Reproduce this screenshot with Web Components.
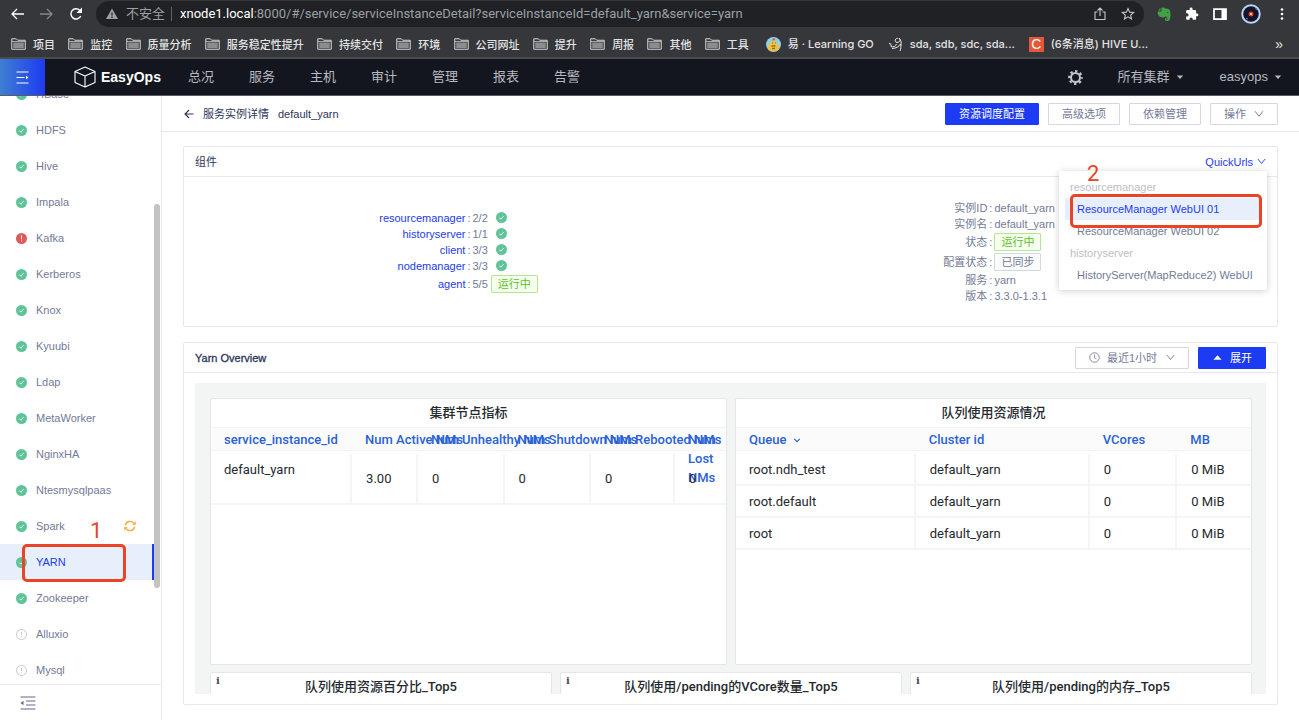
<!DOCTYPE html>
<html lang="zh-CN">
<head>
<meta charset="utf-8">
<title>EasyOps - 服务实例详情</title>
<style>
  html, body { margin: 0; height: 100%; }
  body {
    --blue: #1d3bf2; --ink: #2c3558; --muted: #737a98; --line: #e6e8ef; --red: #ea4326;
    font: 11px/16px "Liberation Sans", "Noto Sans CJK SC", sans-serif;
    color: var(--muted); background: #fff; overflow: hidden;
  }
</style>
</head>
<body>
<ops-page></ops-page>

<script>
const define = (name, html, setup) => {
  const tpl = document.createElement('template');
  tpl.innerHTML = `<style>*{box-sizing:border-box}:host{box-sizing:border-box}
    button,select,input{font:inherit;color:inherit;margin:0;padding:0;border:0;background:none;outline:0}
    a{color:inherit;text-decoration:none}ul,dl,dd,h1,h2,h3{margin:0;padding:0;font:inherit;list-style:none}
    svg{display:block;flex:none}</style>` + html;
  customElements.define(name, class extends HTMLElement {
    connectedCallback() {
      if (this.shadowRoot) return;
      const root = this.attachShadow({ mode: 'open' });
      root.append(tpl.content.cloneNode(true));
      if (setup) setup(root, this);
    }
  });
};

/* ---------- shared pieces ---------- */
const ICONS = {
  ok: '<svg viewBox="0 0 22 22"><circle cx="11" cy="11" r="11" fill="#5fc598"/><path d="M6.8 11.3l3 3 5.4-6" fill="none" stroke="#fff" stroke-width="1.8"/></svg>',
  error: '<svg viewBox="0 0 22 22"><circle cx="11" cy="11" r="11" fill="#dc5b5b"/><path d="M11 5v7.5M11 15v2" stroke="#fff" stroke-width="2"/></svg>',
  idle: '<svg viewBox="0 0 22 22"><circle cx="11" cy="11" r="10" fill="none" stroke="#bdbdbd" stroke-width="1.6"/><path d="M11 5.5v7M11 14.5v2" stroke="#bdbdbd" stroke-width="1.6"/></svg>',
  sync: '<svg viewBox="0 0 22 22" fill="none" stroke="#f5ad3a" stroke-width="2.600"><path d="M2.5 10A8.6 8.6 0 0 1 18 6.200M19.500 12A8.600 8.600 0 0 1 4 15.800"/><path d="M21.500 2.500v6.500H15zM.5 19.500v-6.500H7z" fill="#f5ad3a" stroke="none"/></svg>',
  down: '<svg viewBox="0 0 20 20"><path d="M2 4.500l8 10 8-10" fill="none" stroke="currentColor" stroke-width="2"/></svg>',
  sort: '<svg viewBox="0 0 20 20"><path d="M3 7l7 7 7-7" fill="none" stroke="currentColor" stroke-width="3"/></svg>',
  caret: '<svg viewBox="0 0 20 20"><path d="M2 6h16l-8 9z" fill="currentColor"/></svg>',
  up: '<svg viewBox="0 0 20 20"><path d="M1 15h18l-9-10z" fill="currentColor"/></svg>',
  clock: '<svg viewBox="0 0 22 22" fill="none" stroke="currentColor" stroke-width="1.700"><circle cx="11" cy="11" r="9.500"/><path d="M11 5v6.500l4 2.500"/></svg>',
  back: '<svg viewBox="0 0 20 20" fill="none" stroke="currentColor" stroke-width="2.200"><path d="M10 2L2 10l8 8M2 10h17"/></svg>',
  folder: '<svg viewBox="0 0 30 24"><path d="M1.500 22.500v-21h9l3 3h15v18z" fill="#3a3b3d" stroke="#d4d5d6" stroke-width="2"/><path d="M4.500 9h21v11h-21z" fill="#8b8c8e"/><path d="M2 7h26" stroke="#d4d5d6" stroke-width="1.400"/></svg>'
};
define('ui-icon', `<style>:host{display:inline-block;width:11px;height:11px;flex:none}svg{width:100%;height:100%}span{display:block;height:100%}</style><span></span>`,
  (r, el) => { r.querySelector('span').innerHTML = ICONS[el.getAttribute('name')] || ''; });

define('ui-button', `<style>
  :host{display:inline-block}
  button{display:flex;align-items:center;gap:8px;height:22px;padding:0 13px;border:1px solid #d5d7df;border-radius:1px;background:#fff;color:var(--muted);white-space:nowrap}
  :host([primary]) button{background:var(--blue);border-color:var(--blue);color:#fff}
  </style><button type="button"><slot></slot></button>`);

define('ui-tag', `<style>
  :host{display:inline-block;height:18px;line-height:16px;padding:0 6px;border:1px solid #d5d7df;border-radius:1px;background:#fafafa}
  :host([ok]){border-color:#b4e594;background:#f6ffed;color:#5cc425}
  </style><slot></slot>`);

define('red-mark', `<style>:host{position:absolute;border:3px solid var(--red);border-radius:5px;pointer-events:none}
  span{position:absolute;font:22px/22px Roboto,sans-serif;color:var(--red);bottom:100%;left:var(--n,0);margin-bottom:var(--rise,5px)}
  </style><span><slot></slot></span>`);

/* ---------- browser window ---------- */
define('bookmark-link', `<style>:host{display:block}a{display:flex;align-items:center;gap:7px;white-space:nowrap}
  ui-icon{width:15px;height:12px}</style><a href="#"><slot name="icon"><ui-icon name="folder"></ui-icon></slot><slot></slot></a>`);

define('browser-bar', `<style>
  :host{display:block;background:#36373a;color:#e3e4e6;font-family:"Liberation Sans","Noto Sans CJK SC",sans-serif;border-bottom:2px solid #4a4b4d}
  .tools{display:flex;align-items:center;height:27px;padding:0 12px 0 11px}
  .tools button{display:flex}
  .back{margin-right:16px}.fwd{margin-right:16px}.reload{margin-right:13px}
  .omni{flex:1;display:flex;align-items:center;height:26px;border-radius:13px;background:#202124;padding:0 9px 0 10px;color:#9aa0a6;font:13px/18px Roboto,"Noto Sans CJK SC",sans-serif}
  .omni i{width:1px;height:14px;background:#5f6368;margin:0 8px 0 6px}
  .omni .warn{margin-right:8px}
  label{flex:1;display:flex}label b{font-weight:400;color:#fff}label input{flex:1;min-width:0}
  .omni button + button{margin-left:15px}
  .ext{display:flex;align-items:center;gap:14px;margin-left:13px}
  .marks{display:flex;align-items:center;height:30px;padding:4px 16px 0 11px;font-weight:500;font-family:"Noto Sans CJK SC"}
  .folders{display:flex;justify-content:space-between;flex:none;width:58%;margin-right:17px}
  .sites{display:flex;gap:14px;font-family:Inter,"Noto Sans CJK SC",sans-serif}
  .c{width:15px;height:15px;background:#e8563a;color:#fff;font:14px/15px "Liberation Sans";text-align:center}
  .more{margin-left:auto;font-size:14px;font-family:"Liberation Sans"}
  </style>
  <div class="tools">
    <button class="back" aria-label="后退"><svg width="13" height="12" viewBox="0 0 26 24" fill="none" stroke="#fff" stroke-width="2.600"><path d="M12 2L2 12l10 10M2 12h24"/></svg></button>
    <button class="fwd" aria-label="前进"><svg width="13" height="12" viewBox="0 0 26 24" fill="none" stroke="#85878a" stroke-width="2.600"><path d="M14 2l10 10-10 10M24 12H0"/></svg></button>
    <button class="reload" aria-label="刷新"><svg width="14" height="14" viewBox="0 0 28 28"><path d="M23.500 18A10.300 10.300 0 1 1 21.500 6.500" fill="none" stroke="#fff" stroke-width="3"/><path d="M26 1v11H15z" fill="#fff"/></svg></button>
    <div class="omni">
      <svg class="warn" width="12" height="12" viewBox="0 0 24 24"><path d="M12 1l12 21H0z" fill="#9aa0a6"/><path d="M12 9v6M12 17v3" stroke="#202124" stroke-width="2.400"/></svg>
      <span>不安全</span><i></i>
      <label><b>xnode1.local</b><input aria-label="地址" value=":8000/#/service/serviceInstanceDetail?serviceInstanceId=default_yarn&amp;service=yarn"></label>
      <button aria-label="分享"><svg width="12" height="14" viewBox="0 0 24 28" fill="none" stroke="#c4c7ca" stroke-width="2.200"><path d="M7 10H2v15h20V10h-5M12 18V3M7 7l5-5 5 5"/></svg></button>
      <button aria-label="收藏"><svg width="14" height="13" viewBox="0 0 28 26"><path d="M14 3l3.300 7.300 8 .7-6 5.300 1.800 7.700-7.100-4.200L6.900 24l1.800-7.700-6-5.300 8-.7z" fill="none" stroke="#c4c7ca" stroke-width="2.200"/></svg></button>
    </div>
    <div class="ext">
      <button aria-label="印象笔记"><svg width="14" height="14" viewBox="0 0 28 28"><path d="M9 2c4-2 6 0 7 1 5 0 9 1 10 4 2 7 1 15-1 19-2 3-9 3-9-1 0-3 3-4 5-3-1-2-2-3-4-3-3 3-10 2-13-1C1 15 1 11 2 9h6c1 0 1-1 1-2z" fill="#43a047"/><path d="M2 7l5-5v5z" fill="#43a047"/><path d="M19 11c1-2 4-1 4 1-1-1-3-1-4-1z" fill="#24352a"/><path d="M18 24h3" stroke="#36373a" stroke-width="2"/></svg></button>
      <button aria-label="扩展程序"><svg width="14" height="14" viewBox="0 0 24 24"><path d="M20.500 11H19V7a2 2 0 0 0-2-2h-4V3.500a2.500 2.500 0 0 0-5 0V5H4a2 2 0 0 0-2 2v3.800h1.500a2.700 2.700 0 0 1 0 5.400H2V20a2 2 0 0 0 2 2h3.800v-1.500a2.700 2.700 0 0 1 5.400 0V22H17a2 2 0 0 0 2-2v-4h1.500a2.500 2.500 0 0 0 0-5z" fill="#fff"/></svg></button>
      <button aria-label="侧边栏"><svg width="14" height="12" viewBox="0 0 28 24"><path d="M2 2h24v20H2z" fill="none" stroke="#fff" stroke-width="3.500"/><path d="M17 2h9v20h-9z" fill="#fff"/></svg></button>
      <button aria-label="个人资料"><svg width="20" height="20" viewBox="0 0 40 40"><circle cx="20" cy="20" r="19.500" fill="#b9d4f5"/><circle cx="20" cy="20" r="15.500" fill="#15122a"/><circle cx="20" cy="20" r="5" fill="#d8442c"/><circle cx="20" cy="20" r="2" fill="#ffd9b0"/><path d="M10 29l4 1M29 9l2 3" stroke="#7d86b5" stroke-width="2"/></svg></button>
      <button aria-label="更多"><svg width="12" height="14" viewBox="0 0 24 28" fill="#fff"><circle cx="14" cy="5" r="2.600"/><circle cx="14" cy="14" r="2.600"/><circle cx="14" cy="23" r="2.600"/></svg></button>
    </div>
  </div>
  <div class="marks">
    <nav class="folders"></nav>
    <nav class="sites">
      <bookmark-link><svg slot="icon" width="15" height="15" viewBox="0 0 30 30"><circle cx="15" cy="15" r="15" fill="#8fd0e8"/><path d="M8 13c0-7 14-7 14 0 5 4 5 14-1 15H9c-6-1-6-11-1-15z" fill="#f0c03c"/><path d="M12 7l3-5 4 4z" fill="#d94d31"/><path d="M12 12h1M18 12h1" stroke="#4a2c0a" stroke-width="2"/><path d="M11 18h8M12 23h6" stroke="#a5691d" stroke-width="3"/></svg>易 · Learning GO</bookmark-link>
      <bookmark-link><svg slot="icon" width="15" height="15" viewBox="0 0 30 30" fill="none" stroke="#e9e9ea" stroke-width="2"><path d="M2 13c3-1 5 2 4 6 5 2 9 0 11-5M20 3c-6-2-8 7-2 8 6 0 8-6 4-9 4 4 5 9 4 15M8 23c8 0 14-4 17-9 1 5 1 9-1 14"/></svg>sda, sdb, sdc, sda...</bookmark-link>
      <bookmark-link><span slot="icon" class="c">C</span>(6条消息) HIVE U...</bookmark-link>
    </nav>
    <a class="more" href="#">»</a>
  </div>`,
  r => { r.querySelector('.folders').innerHTML = ['项目', '监控', '质量分析', '服务稳定性提升', '持续交付', '环境', '公司网址', '提升', '周报', '其他', '工具']
      .map(t => `<bookmark-link>${t}</bookmark-link>`).join(''); });

/* ---------- application header ---------- */
define('app-header', `<style>
  :host{display:flex;align-items:center;height:37px;background:#14161f;border-bottom:1px solid #5a5b62;color:#b9bac0;font-size:13px}
  .menu{width:45px;height:36px;display:flex;align-items:center;justify-content:center;background:linear-gradient(90deg,#3f7fd0,#1d3bf2);flex:none}
  .logo{display:flex;align-items:center;gap:5px;margin:0 27px 0 29px;color:#fff;font:bold 14px/18px "Liberation Sans"}
  nav{display:flex;gap:35px}
  .right{margin-left:auto;display:flex;align-items:center;margin-right:17px}
  .right button{display:flex;align-items:center;gap:6px}
  ui-icon{width:8px;height:8px}
  .gear{margin-right:35px}.cluster{margin-right:36px}
  </style>
  <button class="menu" aria-label="菜单"><svg width="13" height="13" viewBox="0 0 26 26" stroke="#fff" stroke-width="2.200"><path d="M1 2h24M1 13h16M1 24h24"/><path d="M20 9.500l5 3.500-5 3.500z" fill="#fff" stroke="none"/></svg></button>
  <a class="logo" href="#"><svg width="22" height="22" viewBox="0 0 44 44" fill="none" stroke="#fff" stroke-width="2.200" stroke-linejoin="round"><path d="M22 2l20 9v22L22 42 2 33V11zM2 11l20 9 20-9M22 20v22"/></svg>EasyOps</a>
  <nav><a href="#">总况</a><a href="#">服务</a><a href="#">主机</a><a href="#">审计</a><a href="#">管理</a><a href="#">报表</a><a href="#">告警</a></nav>
  <div class="right">
    <button class="gear" aria-label="设置"><svg width="15" height="15" viewBox="0 0 30 30" fill="none" stroke="#c4c5ca"><circle cx="15" cy="15" r="9" stroke-width="4"/><circle cx="15" cy="15" r="12.800" stroke-width="4" stroke-dasharray="5 5.050" stroke-dashoffset="2.500"/></svg></button>
    <button class="cluster">所有集群<ui-icon name="caret"></ui-icon></button>
    <button class="user">easyops<ui-icon name="caret"></ui-icon></button>
  </div>`);

/* ---------- sidebar ---------- */
define('service-link', `<style>
  :host{display:block;position:relative}
  a{display:flex;align-items:center;gap:9px;height:36px;padding:0 18px 0 16px}
  .sync{margin-left:auto;width:12px;height:12px;display:none}
  :host([syncing]) .sync{display:block}
  :host([current]) a{background:#e7effd;color:var(--blue);border-right:2px solid var(--blue)}
  </style><a href="#"><ui-icon class="state"></ui-icon><slot></slot><ui-icon class="sync" name="sync"></ui-icon></a><slot name="mark"></slot>`,
  (r, el) => {
    const icon = document.createElement('ui-icon');
    icon.setAttribute('name', el.getAttribute('state'));
    r.querySelector('.state').replaceWith(icon);
  });

define('service-sidebar', `<style>
  :host{display:flex;flex-direction:column;width:162px;flex:none;border-right:1px solid var(--line);min-height:0}
  .view{flex:1;min-height:0;display:flex;overflow:hidden}
  nav{flex:1;margin-top:-20px}
  .bar{width:7px;padding-top:108px}
  .thumb{width:6px;height:80%;background:#c3c3c4;border-radius:3px}
  footer{height:36px;border-top:1px solid var(--line);padding:11px 20px}
  red-mark{left:22px;top:0;width:104px;height:38px;--n:65px;z-index:1}
  </style>
  <div class="view"><nav aria-label="服务"></nav><div class="bar"><div class="thumb"></div></div></div>
  <footer><button aria-label="收起"><svg width="16" height="14" viewBox="0 0 32 28" stroke="#62698c" stroke-width="2"><path d="M1 2h30M12 10h19M12 18h19M1 26h30"/><path d="M7 9.500v9L1 14z" fill="#62698c" stroke="none"/></svg></button></footer>`,
  r => {
    const names = ['HBase', 'HDFS', 'Hive', 'Impala', 'Kafka', 'Kerberos', 'Knox', 'Kyuubi', 'Ldap', 'MetaWorker', 'NginxHA', 'Ntesmysqlpaas', 'Spark', 'YARN', 'Zookeeper', 'Alluxio', 'Mysql'];
    const state = { Kafka: 'error', Alluxio: 'idle', Mysql: 'idle' };
    r.querySelector('nav').innerHTML = names.map(n =>
      `<service-link state="${state[n] || 'ok'}"${n === 'Spark' ? ' syncing' : ''}${n === 'YARN' ? ' current' : ''}>${n}${n === 'YARN' ? '<red-mark slot="mark">1</red-mark>' : ''}</service-link>`).join('');
  });

/* ---------- content ---------- */
define('page-title', `<style>
  :host{display:flex;align-items:center;height:36px;padding:0 21px 0 22px;border-bottom:1px solid var(--line);color:var(--ink)}
  .back{display:flex;margin-right:9px}h1{margin-right:9px}
  .actions{margin-left:auto;display:flex;gap:9px}
  ui-icon{width:10px;height:10px}
  </style>
  <a class="back" href="#" aria-label="返回"><ui-icon name="back"></ui-icon></a><h1>服务实例详情</h1><span>default_yarn</span>
  <div class="actions"><ui-button primary>资源调度配置</ui-button><ui-button>高级选项</ui-button><ui-button>依赖管理</ui-button><ui-button>操作<ui-icon name="down"></ui-icon></ui-button></div>`);

define('card-box', `<style>
  :host{display:flex;flex-direction:column;border:1px solid var(--line);border-radius:2px;min-height:0}
  header{position:relative;display:flex;align-items:center;height:30px;flex:none;padding:0 11px;border-bottom:1px solid var(--line);color:var(--ink)}
  .extra{margin-left:auto;display:flex;align-items:center;gap:9px}
  </style><header><slot name="title"></slot><div class="extra"><slot name="extra"></slot></div></header><slot></slot>`);

define('quick-urls', `<style>
  :host{display:block;position:relative;color:var(--blue)}
  .open{display:flex;align-items:center;gap:4px}
  ui-icon{width:9px;height:9px}
  .menu{position:absolute;right:-1px;top:17px;width:208px;padding:5px 6px 4px;background:#fff;box-shadow:0 1px 7px rgba(0,0,0,.2);border-radius:2px;color:var(--muted);z-index:2;line-height:22px;white-space:nowrap}
  h3{padding-left:5px;color:#bdbec4}
  .menu a{display:block;padding-left:12px;height:22px}
  .menu .on{background:#e7effd;color:var(--blue)}
  red-mark{left:11px;top:23px;width:192px;height:34px;--n:14px;--rise:12px;z-index:3}
  </style>
  <button class="open">QuickUrls<ui-icon name="down"></ui-icon></button>
  <div class="menu">
    <h3>resourcemanager</h3><a class="on" href="#">ResourceManager WebUI 01</a><a href="#">ResourceManager WebUI 02</a>
    <h3>historyserver</h3><a href="#">HistoryServer(MapReduce2) WebUI</a>
    <red-mark>2</red-mark>
  </div>`);

define('info-rows', `<style>
  :host{display:block}
  dl{display:grid;grid-template-columns:var(--label,50%) 1fr;column-gap:2px}
  dt{text-align:right;white-space:nowrap}dd{display:flex;white-space:pre}
  dt,dd{height:16px;align-items:center}
  .tall{height:20px;line-height:20px}
  :host([linked]) dt{color:var(--blue)}
  ui-icon{margin-left:8px}
  span{padding-right:2px}
  [ok].gap{margin-left:3px}
  </style><dl></dl>`,
  (r, el) => {
    r.querySelector('dl').innerHTML = el.getAttribute('rows').split('|').map(row => {
      const [k, v, extra] = row.split('=');
      const tag = { run: '<ui-tag ok>运行中</ui-tag>', runGap: '<ui-tag ok class="gap">运行中</ui-tag>', synced: '<ui-tag>已同步</ui-tag>', ok: '<ui-icon name="ok"></ui-icon>' }[extra] || '';
      const tall = tag.includes('ui-tag') ? ' class="tall"' : '';
      return `<dt${tall}>${el.hasAttribute('linked') ? `<a href="#">${k}</a>` : k}</dt><dd${tall}><span>:</span>${v}${tag}</dd>`;
    }).join('');
  });

define('time-select', `<style>
  :host{display:block}
  label{display:flex;align-items:center;height:22px;border:1px solid #d5d7df;border-radius:1px;padding:0 13px;color:var(--muted)}
  select{appearance:none;margin:0 8px 0 7px;height:20px}
  ui-icon[name=down]{width:9px;height:9px}
  </style><label><ui-icon name="clock"></ui-icon><select aria-label="时间范围"><option>最近1小时</option></select><ui-icon name="down"></ui-icon></label>`);

define('dash-panel', `<style>
  :host{display:block;position:relative;background:#fff;border:1px solid #e4e6e7;border-radius:2px;color:#24292e;font:13px/19px Roboto,"Noto Sans CJK SC",sans-serif;min-width:0}
  h3{height:28px;line-height:28px;text-align:center;font-weight:500}
  i{position:absolute;left:5px;top:1px;font:bold 10px/13px "DejaVu Serif",serif;display:none;color:#464c54}
  :host([info]) i{display:block}
  </style><i>i</i><h3><slot name="title"></slot></h3><slot></slot>`);

define('data-grid', `<style>
  :host{display:block}
  table{width:100%;table-layout:fixed;border-collapse:separate;border-spacing:0}
  th{padding:0 0 3px;font-weight:500;color:#2a62d6;text-align:left}
  th div{display:flex;height:24px;padding:2px 0 0 13px;background:#fbfbfb;border:solid #f3f4f4;border-width:1px 0;white-space:nowrap;overflow:visible}
  th ui-icon{width:8px;height:8px;margin:6px 0 0 7px}
  th.wrap div{white-space:normal}
  td{height:32px;padding:0 0 0 14px;border-right:2px solid #f4f5f5;border-bottom:2px solid #f4f5f5}
  td:first-child{padding-left:13px}td:last-child{border-right:0}
  :host([tall]) td{height:51px}
  :host([tall]) td:first-child{vertical-align:top;padding-top:6px}
  </style><table><colgroup></colgroup><thead><tr></tr></thead><tbody></tbody></table>`,
  (r, el) => {
    const list = (a, s) => el.getAttribute(a).split(s);
    r.querySelector('colgroup').innerHTML = list('cols', ',').map(w => `<col style="width:${w}%">`).join('');
    r.querySelector('thead tr').innerHTML = list('heads', ',').map(h =>
      `<th${h.startsWith('^') ? ' class="wrap"' : ''}><div>${h.replace('^', '').replace('~', '<ui-icon name="sort"></ui-icon>')}</div></th>`).join('');
    r.querySelector('tbody').innerHTML = list('rows', ';').map(x => `<tr>${x.split(',').map(c => `<td>${c}</td>`).join('')}</tr>`).join('');
  });

define('yarn-dashboard', `<style>
  :host{display:block;flex:1;min-height:0;margin:10px 11px;padding:15px 14px 15px 15px;background:#f3f5f5;overflow:hidden}
  .row{display:grid;gap:8px;margin-bottom:7px}
  .two{grid-template-columns:1fr 1fr}.two dash-panel{height:267px}
  .three{grid-template-columns:1fr 1fr 1fr}.three dash-panel{height:200px}
  </style>
  <div class="row two">
    <dash-panel><span slot="title">集群节点指标</span>
      <data-grid tall cols="27.4,12.8,16.8,16.8,16.3,9.9" heads="service_instance_id,Num Active NMs,Num Unhealthy NMs,Num Shutdown NMs,Num Rebooted NMs,^Num Lost NMs" rows="default_yarn,3.00,0,0,0,0"></data-grid></dash-panel>
    <dash-panel><span slot="title">队列使用资源情况</span>
      <data-grid cols="34.9,33.8,17,14.3" heads="Queue~,Cluster id,VCores,MB" rows="root.ndh_test,default_yarn,0,0 MiB;root.default,default_yarn,0,0 MiB;root,default_yarn,0,0 MiB"></data-grid></dash-panel>
  </div>
  <div class="row three">
    <dash-panel info><span slot="title">队列使用资源百分比_Top5</span></dash-panel>
    <dash-panel info><span slot="title">队列使用/pending的VCore数量_Top5</span></dash-panel>
    <dash-panel info><span slot="title">队列使用/pending的内存_Top5</span></dash-panel>
  </div>`);

define('ops-page', `<style>
  :host{display:flex;flex-direction:column;height:100vh}
  .body{flex:1;display:flex;min-height:0}
  main{flex:1;display:flex;flex-direction:column;min-width:0}
  .cards{flex:1;min-height:0;display:flex;flex-direction:column;gap:15px;padding:14px 21px 15px}
  .cards card-box:last-child{flex:1}
  .summary{display:grid;grid-template-columns:1fr 1fr;align-items:center;height:149px}
  .summary info-rows:first-child{--label:51.5%}
  .summary info-rows:last-child{--label:47%}
  b{font-weight:500;-webkit-text-stroke:.3px}
  ui-button ui-icon{width:9px;height:9px;margin-left:1px}
  </style>
  <browser-bar></browser-bar>
  <app-header></app-header>
  <div class="body">
    <service-sidebar></service-sidebar>
    <main>
      <page-title></page-title>
      <div class="cards">
        <card-box><h2 slot="title">组件</h2><quick-urls slot="extra"></quick-urls>
          <div class="summary">
            <info-rows linked rows="resourcemanager=2/2=ok|historyserver=1/1=ok|client=3/3=ok|nodemanager=3/3=ok|agent=5/5=runGap"></info-rows>
            <info-rows rows="实例ID=default_yarn|实例名=default_yarn|状态==run|配置状态==synced|服务=yarn|版本=3.3.0-1.3.1"></info-rows>
          </div></card-box>
        <card-box><h2 slot="title"><b>Yarn Overview</b></h2><time-select slot="extra"></time-select><ui-button primary slot="extra"><ui-icon name="up"></ui-icon>展开</ui-button>
          <yarn-dashboard></yarn-dashboard></card-box>
      </div>
    </main>
  </div>`);
</script>
</body>
</html>
